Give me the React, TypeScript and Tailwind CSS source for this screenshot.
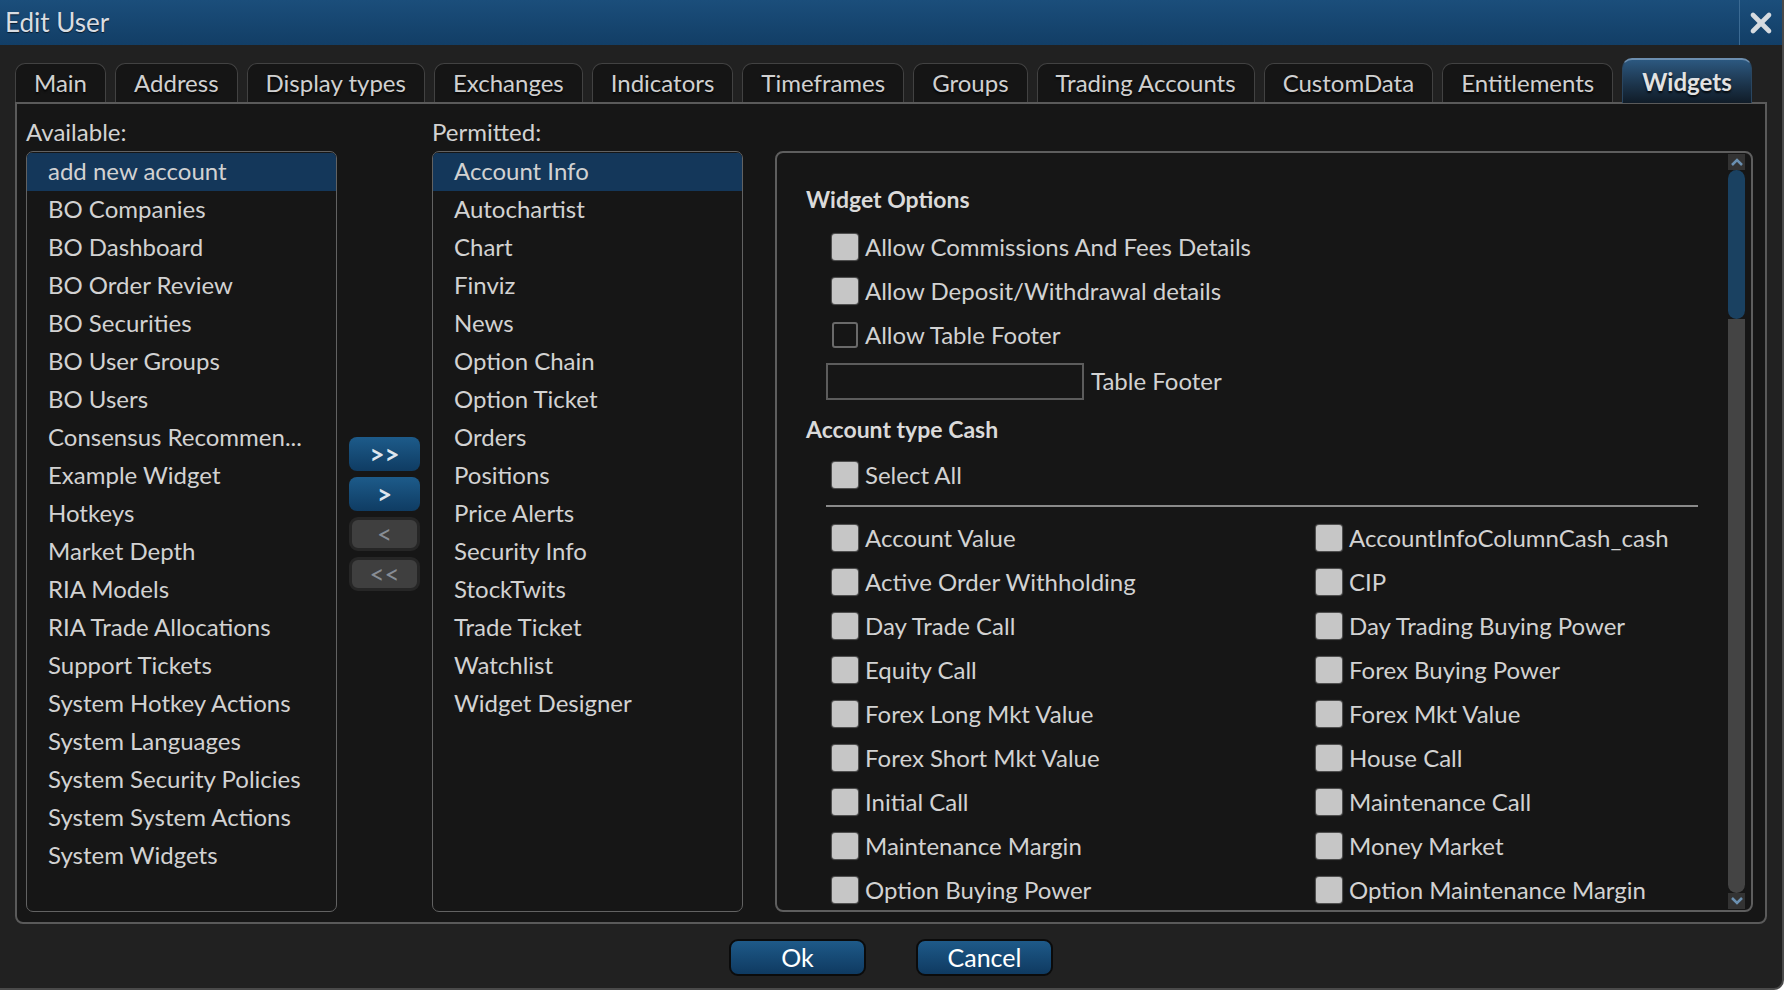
import { X } from 'lucide-react';

const tabs = [
    'Main',
    'Address',
    'Display types',
    'Exchanges',
    'Indicators',
    'Timeframes',
    'Groups',
    'Trading Accounts',
    'CustomData',
    'Entitlements',
    'Widgets',
];

const available = [
    'add new account',
    'BO Companies',
    'BO Dashboard',
    'BO Order Review',
    'BO Securities',
    'BO User Groups',
    'BO Users',
    'Consensus Recommen...',
    'Example Widget',
    'Hotkeys',
    'Market Depth',
    'RIA Models',
    'RIA Trade Allocations',
    'Support Tickets',
    'System Hotkey Actions',
    'System Languages',
    'System Security Policies',
    'System System Actions',
    'System Widgets',
];

const permitted = [
    'Account Info',
    'Autochartist',
    'Chart',
    'Finviz',
    'News',
    'Option Chain',
    'Option Ticket',
    'Orders',
    'Positions',
    'Price Alerts',
    'Security Info',
    'StockTwits',
    'Trade Ticket',
    'Watchlist',
    'Widget Designer',
];

const cashFields = [
    ['Account Value', 'AccountInfoColumnCash_cash'],
    ['Active Order Withholding', 'CIP'],
    ['Day Trade Call', 'Day Trading Buying Power'],
    ['Equity Call', 'Forex Buying Power'],
    ['Forex Long Mkt Value', 'Forex Mkt Value'],
    ['Forex Short Mkt Value', 'House Call'],
    ['Initial Call', 'Maintenance Call'],
    ['Maintenance Margin', 'Money Market'],
    ['Option Buying Power', 'Option Maintenance Margin'],
];

const Box = ({ empty = false }: { empty?: boolean }) =>
    empty ? (
        <span className="w-[26px] h-[26px] shrink-0 rounded-[3px] border-2 border-[#6a6a6a] bg-transparent" />
    ) : (
        <span className="w-[26px] h-[26px] shrink-0 rounded-[3px] bg-[#c6c6c6] shadow-[0_0_1px_1px_rgba(150,150,150,0.5)]" />
    );

const CheckRow = ({ label, empty = false }: { label: string; empty?: boolean }) => (
    <div className="h-[44px] flex items-center gap-[7px]">
        <Box empty={empty} />
        <span className="whitespace-nowrap">{label}</span>
    </div>
);

const ListBox = ({ items }: { items: string[] }) => (
    <div className="h-[761px] border border-[#626262] rounded-[7px] bg-[#161616] overflow-hidden pt-[1px]">
        {items.map((item, i) => (
            <div
                key={item}
                className={`h-[38px] leading-[36px] pl-[21px] whitespace-nowrap ${i === 0 ? 'bg-[#14375a]' : ''}`}
            >
                {item}
            </div>
        ))}
    </div>
);

const MoveButton = ({ label, active }: { label: string; active: boolean }) =>
    active ? (
        <button className="h-[34px] w-[71px] rounded-[8px] bg-gradient-to-b from-[#1d5b8a] to-[#0f3c63] text-[#dfe6ee] text-[26px] leading-none font-bold">
            {label}
        </button>
    ) : (
        <button className="h-[34px] w-[71px] rounded-[9px] bg-[#3f3f3f] border-[3px] border-[#262626] text-[#878d95] text-[26px] leading-none">
            {label}
        </button>
    );

const App = () => {
    return (
        <div
            className="w-[1784px] h-[990px] bg-[#212121] text-[#d2d2d2] text-[24px] flex flex-col overflow-hidden border-r-2 border-b-2 border-[#4a4a4a] rounded-br-[10px]"
            style={{ fontFamily: 'Lato, "Open Sans", sans-serif' }}
        >
            {/* Title bar */}
            <div className="h-[45px] shrink-0 flex items-center bg-gradient-to-b from-[#1b4e7b] to-[#123e66]">
                <span className="pl-[5px] flex-1 text-[26px] text-[#d9dde2] [text-shadow:0_1px_1px_rgba(0,0,0,0.6)]">
                    Edit User
                </span>
                <div className="h-full w-[43px] border-l border-[#3b6a93] flex items-center justify-center">
                    <X size={32} strokeWidth={3.5} className="text-[#d6dbe0]" />
                </div>
            </div>

            {/* Tabs */}
            <div className="flex items-end gap-[9px] pl-[15px] pt-[13px] h-[57px] shrink-0">
                {tabs.map((t) =>
                    t === 'Widgets' ? (
                        <div
                            key={t}
                            className="h-[45px] px-[19px] -mb-px z-10 flex items-center rounded-t-[10px] border-t-2 border-x border-[#6d8fb0] border-x-[#2a4660] bg-gradient-to-b from-[#2c5880] to-[#101c28] font-bold text-[#e2e2e2] [text-shadow:0_2px_2px_rgba(0,0,0,0.8)]"
                        >
                            {t}
                        </div>
                    ) : (
                        <div
                            key={t}
                            className="h-[39px] px-[18px] flex items-center rounded-t-[10px] border border-b-0 border-[#424242] bg-[#151515] text-[#d0d0d0] [text-shadow:0_2px_2px_rgba(0,0,0,0.8)]"
                        >
                            {t}
                        </div>
                    )
                )}
            </div>

            {/* Tab panel */}
            <div className="ml-[15px] w-[1752px] h-[822px] shrink-0 border-2 border-[#5a5a5a] rounded-b-[8px] bg-[#161616] grid grid-cols-[311px_71px_311px_1fr] pl-[9px] pr-[12px] gap-x-[12px]">
                <div className="flex flex-col">
                    <div className="h-[30px] leading-[30px] mt-[13px] mb-[4px]">Available:</div>
                    <ListBox items={available} />
                </div>

                <div className="flex flex-col gap-[6px] pt-[333px]">
                    <MoveButton label=">>" active />
                    <MoveButton label=">" active />
                    <MoveButton label="<" active={false} />
                    <MoveButton label="<<" active={false} />
                </div>

                <div className="flex flex-col">
                    <div className="h-[30px] leading-[30px] mt-[13px] mb-[4px]">Permitted:</div>
                    <ListBox items={permitted} />
                </div>

                <div className="ml-[20px] mt-[47px] h-[761px] border-2 border-[#5e5e5e] rounded-[8px] bg-[#161616] flex overflow-hidden">
                    <div className="flex-1 pl-[29px] pt-[20px]">
                        <div className="h-[52px] flex items-center font-bold text-[23px] text-[#dadada]">
                            Widget Options
                        </div>
                        <div className="pl-[26px]">
                            <CheckRow label="Allow Commissions And Fees Details" />
                            <CheckRow label="Allow Deposit/Withdrawal details" />
                            <CheckRow label="Allow Table Footer" empty />
                        </div>
                        <div className="h-[48px] flex items-center gap-[7px] pl-[20px]">
                            <div className="w-[258px] h-[37px] border-2 border-[#5c5c5c] bg-[#161616]" />
                            <span>Table Footer</span>
                        </div>
                        <div className="h-[48px] flex items-center font-bold text-[23px] text-[#dadada]">
                            Account type Cash
                        </div>
                        <div className="pl-[26px]">
                            <CheckRow label="Select All" />
                        </div>
                        <div className="ml-[20px] w-[872px] mt-[8px] h-[2px] bg-[#8a8a8a]" />
                        <div className="pl-[26px] pt-[9px] grid grid-cols-[484px_1fr]">
                            {cashFields.map(([a, b]) => (
                                <div key={a} className="contents">
                                    <CheckRow label={a} />
                                    <CheckRow label={b} />
                                </div>
                            ))}
                        </div>
                    </div>

                    {/* Scrollbar */}
                    <div className="w-[17px] mr-[6px] flex flex-col pt-[1px] pb-[1px]">
                        <div className="h-[16px] bg-[#333] flex items-center justify-center">
                            <svg width="12" height="8" viewBox="0 0 12 8">
                                <path d="M1 7 L6 2 L11 7" stroke="#6a8fb0" strokeWidth="2.5" fill="none" />
                            </svg>
                        </div>
                        <div className="flex-1 flex flex-col bg-[#161616]">
                            <div className="h-[149px] rounded-full bg-[#1a4161] shrink-0" />
                            <div className="flex-1 rounded-b-full bg-[#444444]" />
                        </div>
                        <div className="h-[16px] bg-[#333] flex items-center justify-center">
                            <svg width="12" height="8" viewBox="0 0 12 8">
                                <path d="M1 1 L6 6 L11 1" stroke="#6a8fb0" strokeWidth="2.5" fill="none" />
                            </svg>
                        </div>
                    </div>
                </div>
            </div>

            {/* Footer buttons */}
            <div className="flex-1 flex items-start justify-center gap-[50px] pt-[15px]">
                <button className="w-[137px] h-[37px] rounded-[9px] border-2 border-[#0b0b0b] bg-gradient-to-b from-[#1e5a89] to-[#0f3a61] text-white text-[25px] leading-none">
                    Ok
                </button>
                <button className="w-[137px] h-[37px] rounded-[9px] border-2 border-[#0b0b0b] bg-gradient-to-b from-[#1e5a89] to-[#0f3a61] text-white text-[25px] leading-none">
                    Cancel
                </button>
            </div>
        </div>
    );
};

export default App;
